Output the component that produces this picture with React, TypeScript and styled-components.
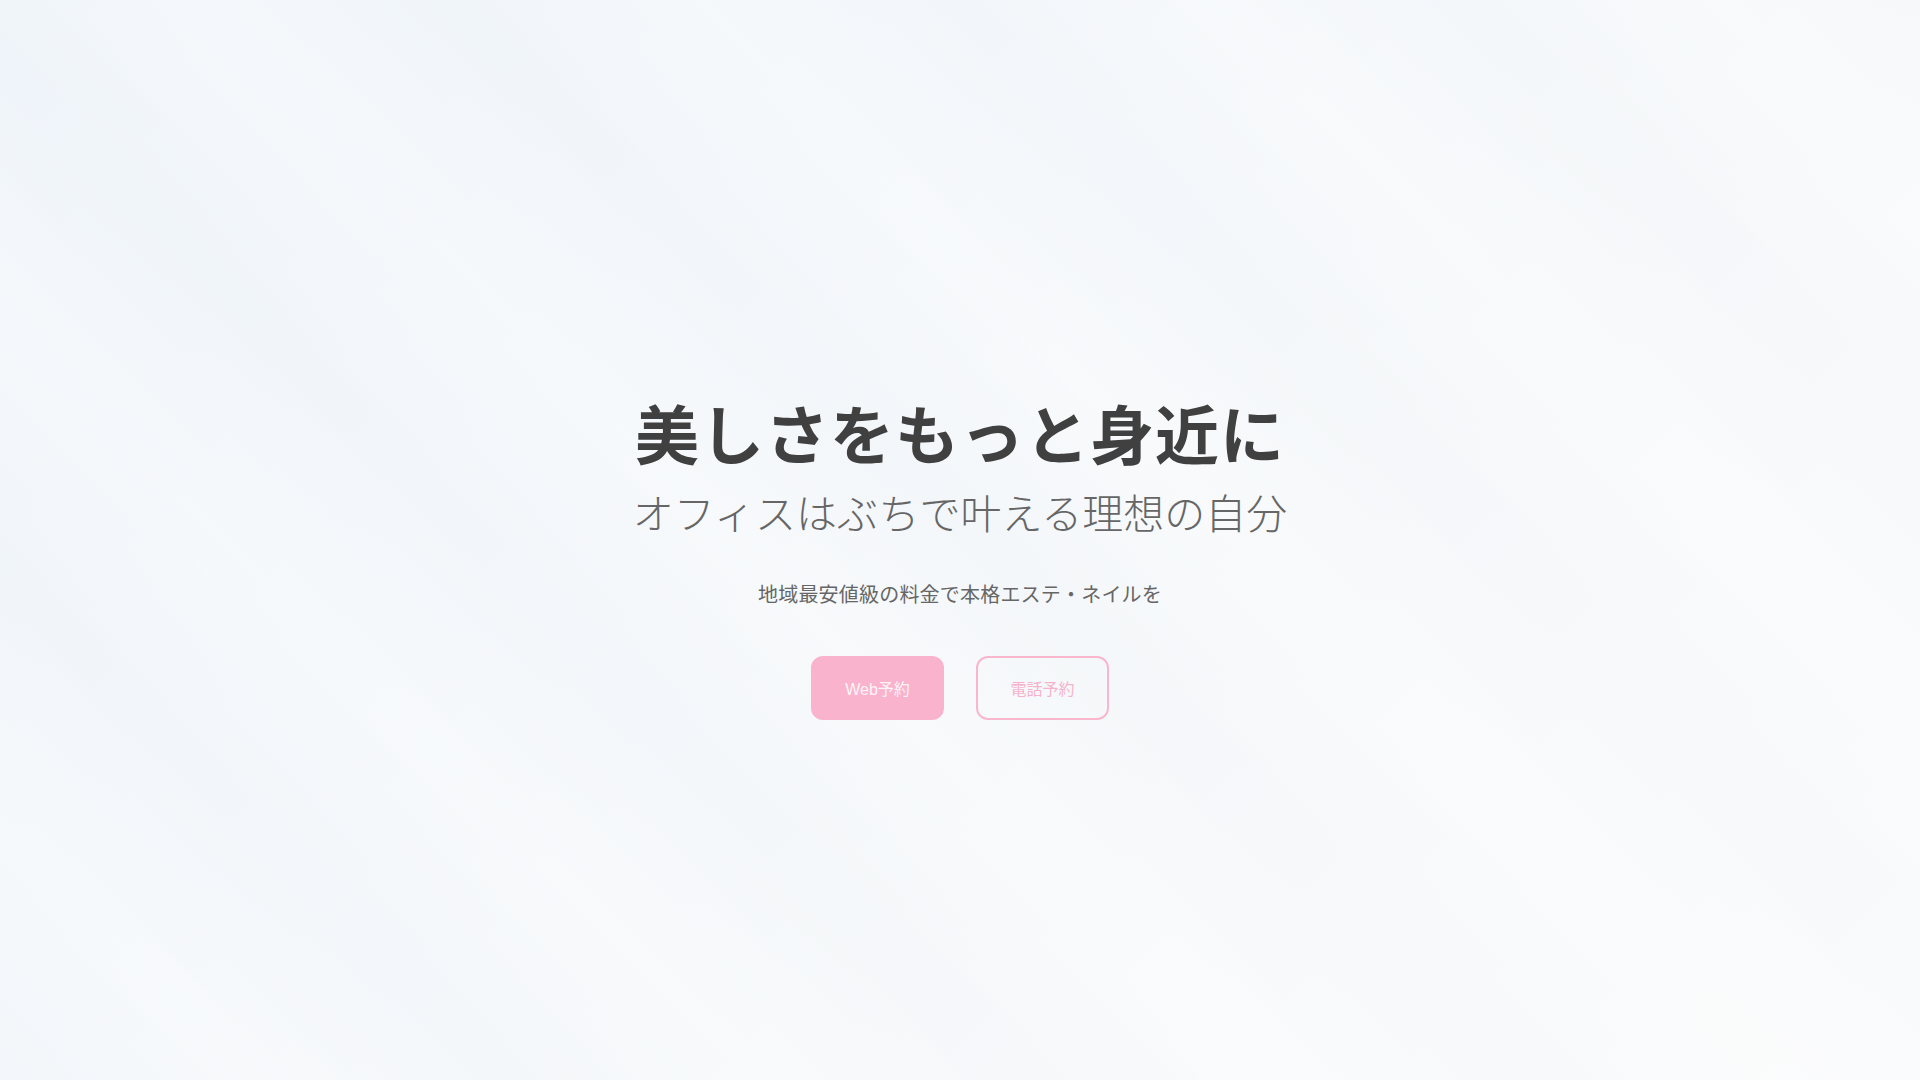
import React from 'react';
import styled, { createGlobalStyle } from 'styled-components';

const GlobalStyle = createGlobalStyle`
    html, body {
        margin: 0;
        padding: 0;
    }
    body {
        font-family: "Noto Sans CJK JP", "Noto Sans", sans-serif;
        color: #404040;
    }
    * {
        box-sizing: border-box;
    }
`;

const Hero = styled.section`
    position: relative;
    min-height: 100vh;
    display: flex;
    align-items: center;
    justify-content: center;
    padding-top: 32px;
    background: linear-gradient(135deg, #eef4f9 0%, #f4f7fa 50%, #f9fafb 100%);
    overflow: hidden;

    &::before {
        content: '';
        position: absolute;
        inset: 0;
        background: repeating-linear-gradient(
            45deg,
            rgba(255, 255, 255, 0) 0px,
            rgba(255, 255, 255, 0.35) 180px,
            rgba(255, 255, 255, 0) 360px
        );
        pointer-events: none;
    }
`;

const Content = styled.div`
    position: relative;
    display: flex;
    flex-direction: column;
    align-items: center;
    text-align: center;
`;

const Title = styled.h1`
    margin: 0;
    font-size: 64px;
    font-weight: 700;
    line-height: 77px;
    letter-spacing: 1px;
    color: #404040;
`;

const SubTitle = styled.p`
    margin: 12px 0 0;
    font-size: 41px;
    font-weight: 300;
    line-height: 59px;
    color: #666;
`;

const Lead = styled.p`
    margin: 37px 0 0;
    font-size: 20px;
    line-height: 32px;
    letter-spacing: 0.2px;
    color: #666;
`;

const Actions = styled.div`
    display: flex;
    gap: 32px;
    margin-top: 46px;
`;

const Button = styled.a<{ $filled?: boolean }>`
    display: inline-flex;
    align-items: center;
    justify-content: center;
    width: 133px;
    height: 64px;
    border-radius: 12px;
    font-family: "Liberation Sans", "Noto Sans CJK JP", sans-serif;
    font-size: 16px;
    text-decoration: none;
    cursor: pointer;
    border: 2px solid ${({ $filled }) => ($filled ? '#fab3cc' : '#f9b6cd')};
    background: ${({ $filled }) => ($filled ? '#fab3cc' : 'transparent')};
    color: ${({ $filled }) => ($filled ? '#fff5f8' : '#f6b2ca')};
`;

const App: React.FC = () => {
    return (
        <>
            <GlobalStyle />
            <Hero>
                <Content>
                    <Title>美しさをもっと身近に</Title>
                    <SubTitle>オフィスはぶちで叶える理想の自分</SubTitle>
                    <Lead>地域最安値級の料金で本格エステ・ネイルを</Lead>
                    <Actions>
                        <Button $filled href="#web">Web予約</Button>
                        <Button href="#tel">電話予約</Button>
                    </Actions>
                </Content>
            </Hero>
        </>
    );
};

export default App;
